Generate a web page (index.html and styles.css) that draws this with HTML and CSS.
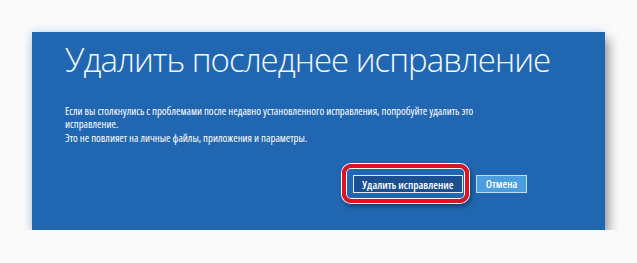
FILE: index.html
```html
<!DOCTYPE html>
<html lang="ru">

<head>
    <meta charset="UTF-8" />
    <title>Удалить последнее исправление</title>
    <link rel="stylesheet" href="styles.css">
</head>

<body>
    <section class="panel">
        <h1 class="panel-title">Удалить последнее исправление</h1>
        <p class="panel-text">
            Если вы столкнулись с проблемами после недавно установленного исправления, попробуйте удалить это исправление.
        </p>
        <p class="panel-text">Это не повлияет на личные файлы, приложения и параметры.</p>
        <div class="actions">
            <span class="mark">
                <button class="btn btn-primary">Удалить исправление</button>
            </span>
            <button class="btn btn-cancel">Отмена</button>
        </div>
    </section>
</body>

</html>
```

FILE: styles.css
```css
:root {
    --panel: #2166b0;
    --text: #ffffff;
    --red: #e3101e;
}

* {
    margin: 0;
    padding: 0;
    box-sizing: border-box;
}

body {
    background: #fafafa;
    padding: 32px 0 0 32px;
}

.panel {
    width: 573px;
    height: 198px;
    padding: 8px 33px 0 33px;
    background: var(--panel);
    color: var(--text);
    box-shadow: 4px 7px 10px rgba(0, 0, 0, 0.38), -2px -2px 8px rgba(150, 200, 255, 0.35);
}

.panel-title {
    font-family: "Open Sans", sans-serif;
    font-weight: 300;
    font-size: 33px;
    letter-spacing: -1px;
    line-height: 40px;
    color: #f2f8ff;
    white-space: nowrap;
}

.panel-title + .panel-text {
    margin-top: 24px;
}

.panel-text {
    font-family: "Open Sans", sans-serif;
    font-stretch: 75%;
    font-size: 10.8px;
    line-height: 13px;
    width: 450px;
}

.panel-text + .panel-text {
    margin-top: 1px;
}

.actions {
    display: flex;
    align-items: center;
    justify-content: flex-end;
    gap: 7px;
    margin-top: 20px;
    padding-right: 45px;
}

.mark {
    display: inline-flex;
    padding: 7px 2px 6px 7px;
    border: 4px solid var(--red);
    border-radius: 9px;
    box-shadow: 0 0 0 1px #fff, inset 0 0 0 1px #fff, 2px 3px 5px rgba(0, 0, 0, 0.45);
}

.btn {
    height: 18px;
    font-family: "Open Sans", sans-serif;
    font-stretch: 75%;
    font-size: 11px;
    font-weight: 600;
    white-space: nowrap;
    color: #fff;
    border: 1px solid #e4edf8;
}

.btn-primary {
    width: 110px;
    background: #1c4f90;
}

.btn-cancel {
    width: 51px;
    background: #4a9ddf;
    border-color: #b9def6;
}
```
